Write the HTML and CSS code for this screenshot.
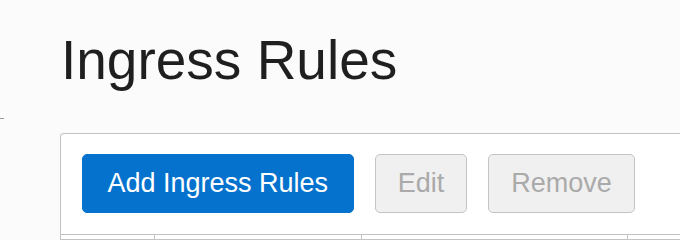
FILE: index.html
```html
<!DOCTYPE html>
<html lang="en">
<head>
  <meta charset="UTF-8">
  <meta name="viewport" content="width=device-width, initial-scale=1">
  <title>Ingress Rules</title>
  <link rel="stylesheet" href="styles.css">
</head>
<body>
  <div class="layout">
    <div class="side-edge"></div>

    <div class="content">
      <h1 class="page-title">Ingress Rules</h1>

      <div class="panel">
        <div class="toolbar">
          <button class="btn btn-primary">Add Ingress Rules</button>
          <button class="btn" disabled>Edit</button>
          <button class="btn" disabled>Remove</button>
        </div>

        <div class="table-head">
          <div class="cell cell-check"></div>
          <div class="cell cell-a"></div>
          <div class="cell cell-b"></div>
          <div class="cell cell-c"></div>
        </div>
      </div>
    </div>
  </div>
</body>
</html>
```

FILE: styles.css
```css
body {
  margin: 0;
  background: #fbfbfb;
  font-family: 'Liberation Sans', Arial, sans-serif;
  color: #222;
  overflow: hidden;
  height: 240px;
}

.layout {
  display: flex;
  width: 680px;
  height: 240px;
  overflow: hidden;
}

.side-edge {
  width: 4px;
  flex-shrink: 0;
  margin-top: 118px;
  height: 0;
  border-top: 1px solid #999;
}

.content {
  padding-left: 56px;
  flex-shrink: 0;
}

.page-title {
  font-size: 55px;
  font-weight: normal;
  line-height: 66px;
  margin: 27px 0 40px 1px;
  color: #1f1f1f;
}

.panel {
  width: 640px;
  background: #fff;
  border: 1px solid #c3c3c3;
  border-right: none;
  border-radius: 4px 0 0 0;
}

.toolbar {
  display: flex;
  gap: 21px;
  padding: 20px 21px 21px 21px;
}

.btn {
  height: 59px;
  box-sizing: border-box;
  padding: 0 22px;
  font-family: 'Liberation Sans', Arial, sans-serif;
  font-size: 27px;
  color: #aaa;
  background: #f0f0f0;
  border: 1px solid #c4c4c4;
  border-radius: 5px;
}

.btn-primary {
  padding: 0 24.5px;
  color: #fff;
  background: #0572ce;
  border-color: #0572ce;
  cursor: pointer;
}

.table-head {
  display: flex;
  border-top: 1px solid #c3c3c3;
  height: 4px;
}

.cell {
  border-left: 1px solid #c3c3c3;
}

.cell-check { width: 93px; border-left: none; }
.cell-a { width: 206px; }
.cell-b { width: 265px; }
.cell-c { flex: 1; }
```
